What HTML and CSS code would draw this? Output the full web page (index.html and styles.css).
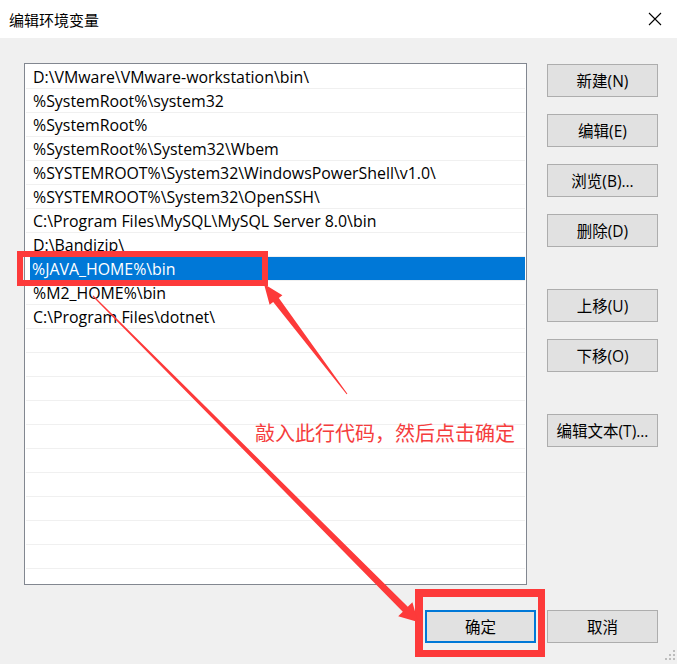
FILE: index.html
```html
<!DOCTYPE html>
<html lang="zh-CN">
<head>
<meta charset="utf-8">
<title>编辑环境变量</title>
<link rel="stylesheet" href="styles.css">
</head>
<body>
<div class="window">
  <div class="titlebar">
    <span class="title">编辑环境变量</span>
    <svg class="close" width="14" height="14" viewBox="0 0 14 14"><path d="M1 1 L13 13 M13 1 L1 13" stroke="#000" stroke-width="1.1" fill="none"/></svg>
  </div>
  <div class="content">
    <div class="main">
      <div class="list">
        <div class="row">D:\VMware\VMware-workstation\bin\</div>
        <div class="row">%SystemRoot%\system32</div>
        <div class="row">%SystemRoot%</div>
        <div class="row">%SystemRoot%\System32\Wbem</div>
        <div class="row">%SYSTEMROOT%\System32\WindowsPowerShell\v1.0\</div>
        <div class="row">%SYSTEMROOT%\System32\OpenSSH\</div>
        <div class="row">C:\Program Files\MySQL\MySQL Server 8.0\bin</div>
        <div class="row">D:\Bandizip\</div>
        <div class="row editing"><div class="edit">%JAVA_HOME%\bin</div></div>
        <div class="row">%M2_HOME%\bin</div>
        <div class="row">C:\Program Files\dotnet\</div>
        <div class="row"></div>
        <div class="row"></div>
        <div class="row"></div>
        <div class="row"></div>
        <div class="row"></div>
        <div class="row"></div>
        <div class="row"></div>
        <div class="row"></div>
        <div class="row"></div>
        <div class="row"></div>
        <div class="row"></div>
      </div>
      <div class="side">
        <div class="group">
          <button class="btn">新建(N)</button>
          <button class="btn">编辑(E)</button>
          <button class="btn">浏览(B)...</button>
          <button class="btn">删除(D)</button>
        </div>
        <div class="group">
          <button class="btn">上移(U)</button>
          <button class="btn">下移(O)</button>
        </div>
        <div class="group">
          <button class="btn">编辑文本(T)...</button>
        </div>
      </div>
    </div>
    <div class="footer">
      <button class="btn default">确定</button>
      <button class="btn">取消</button>
    </div>
  </div>

  <div class="mark mark-row"></div>
  <div class="mark mark-ok"></div>
  <div class="note">敲入此行代码，然后点击确定</div>
  <svg class="arrows" width="677" height="664" viewBox="0 0 677 664">
    <polygon fill="#fd3a3a" points="92.6,296.4 402.8,611.7 398.2,616.3 418,622 412.4,602.2 407.8,606.8 93.4,295.6"/>
    <polygon fill="#fd3a3a" points="347.4,393.7 278.8,297.9 282.4,295.2 264,284 269.6,304.8 273.2,302.1 346.6,394.3"/>
  </svg>
  <svg class="grip" width="12" height="12" viewBox="0 0 12 12">
    <rect x="9" y="0" width="2" height="2" fill="#bdbdbd"/>
    <rect x="5" y="4" width="2" height="2" fill="#bdbdbd"/>
    <rect x="9" y="4" width="2" height="2" fill="#bdbdbd"/>
    <rect x="1" y="8" width="2" height="2" fill="#bdbdbd"/>
    <rect x="5" y="8" width="2" height="2" fill="#bdbdbd"/>
    <rect x="9" y="8" width="2" height="2" fill="#bdbdbd"/>
  </svg>
</div>
</body>
</html>
```
FILE: styles.css
```css
html, body {
  margin: 0;
  padding: 0;
  background: #f0f0f0;
}
body {
  font-family: "Open Sans", "Noto Sans CJK SC", sans-serif;
  font-size: 15.9px;
  color: #000;
}
.window {
  position: relative;
  width: 677px;
  height: 664px;
  background: #f0f0f0;
  overflow: hidden;
}
.titlebar {
  height: 38px;
  background: #fff;
  display: flex;
  align-items: center;
  justify-content: space-between;
  padding: 0 15px 0 9px;
}
.title {
  font-family: "Noto Sans CJK SC", sans-serif;
  font-size: 15px;
  color: #000;
}
.close {
  display: block;
}
.content {
  padding: 25px 19px 0 24px;
}
.main {
  display: flex;
  gap: 20px;
}
.list {
  width: 501px;
  height: 519px;
  border: 1px solid #828790;
  background: #fff;
  padding-top: 1px;
  box-sizing: content-box;
  overflow: hidden;
}
.list .row {
  height: 23px;
  line-height: 24px;
  border-bottom: 1px solid #f0f0f0;
  padding-left: 7px;
  white-space: nowrap;
  margin: 0 1px;
  overflow: hidden;
}
.list .row.editing {
  padding-left: 4px;
}
.edit {
  background: #0078d7;
  color: #fff;
  height: 23px;
  padding-left: 2px;
  margin-right: -1px;
}
.side {
  display: flex;
  flex-direction: column;
  gap: 42px;
  padding-top: 1px;
}
.group {
  display: flex;
  flex-direction: column;
  gap: 17px;
}
.btn {
  width: 111px;
  height: 33px;
  background: #e1e1e1;
  border: 1px solid #adadad;
  font-family: "Open Sans", "Noto Sans CJK SC", sans-serif;
  font-size: 15.5px;
  color: #000;
  padding: 0;
  margin: 0;
  border-radius: 0;
}
.btn.default {
  border: 2px solid #0078d7;
}
.footer {
  display: flex;
  justify-content: flex-end;
  gap: 11px;
  margin-top: 25px;
}
.mark {
  position: absolute;
  border: 6px solid #fd3a3a;
  box-sizing: border-box;
}
.mark-row {
  left: 17px;
  top: 251px;
  width: 251px;
  height: 35px;
}
.mark-ok {
  left: 415px;
  top: 589px;
  width: 130px;
  height: 68px;
  border-width: 8px 7px 7px 8px;
}
.note {
  position: absolute;
  left: 255px;
  top: 418px;
  font-family: "Noto Sans CJK SC", sans-serif;
  font-size: 20px;
  color: #f53d3d;
  white-space: nowrap;
}
.arrows {
  position: absolute;
  left: 0;
  top: 0;
  pointer-events: none;
}
.grip {
  position: absolute;
  right: 1px;
  bottom: 2px;
}
```
